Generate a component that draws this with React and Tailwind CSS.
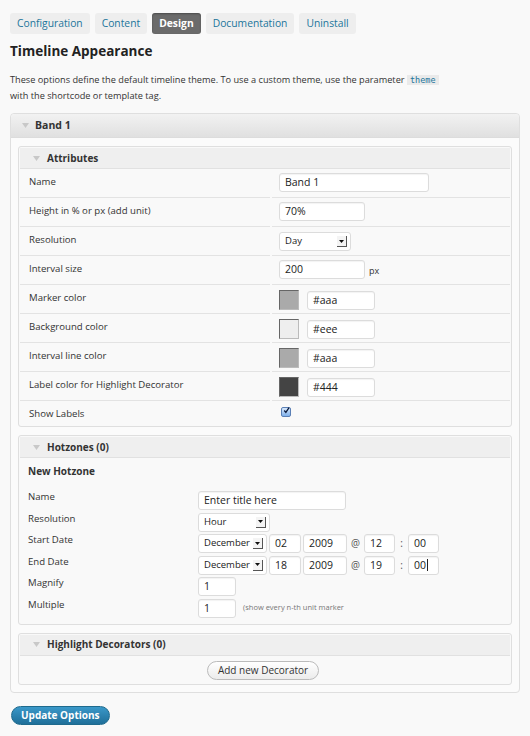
import React from 'react';

const Tri = () => (
  <svg width="7" height="5" viewBox="0 0 7 5" className="shrink-0">
    <path d="M0 0 L7 0 L3.5 5 Z" fill="#c8c8c8" />
  </svg>
);

const Input = ({ value, w, caret }) => (
  <div
    className={`${w} h-[19px] rounded-[3px] border border-[#dcdcdc] bg-white px-[5px] text-[10.5px] leading-[17px] text-[#222] shadow-[inset_0_1px_1px_rgba(0,0,0,0.05)] flex items-center`}
  >
    {value}
    {caret && <span className="ml-px h-[12px] w-px bg-[#222]" />}
  </div>
);

const Select = ({ value, w }) => (
  <div
    className={`${w} h-[19px] rounded-[3px] border border-[#dcdcdc] bg-white pl-[5px] pr-[3px] text-[9.5px] text-[#222] flex items-center justify-between`}
  >
    <span>{value}</span>
    <span className="flex h-[11px] w-[10px] shrink-0 items-center justify-center border-r border-b border-[#555] bg-[#f4f4f4]">
      <svg width="5" height="3" viewBox="0 0 5 3">
        <path d="M0 0 L5 0 L2.5 3 Z" fill="#111" />
      </svg>
    </span>
  </div>
);

const Swatch = ({ color }) => (
  <span className={`h-[20px] w-[20px] border border-[#666] border-r-[#bbb] border-b-[#bbb] ${color}`} />
);

const Row = ({ label, last, children }) => (
  <div className="grid grid-cols-[250px_1fr] gap-x-[2px]">
    <div className={last ? 'h-[24px] pl-[9px] pt-[6px] leading-[14px]' : 'h-[29px] border-b border-[#e3e3e3] pl-[9px] pt-[6px] leading-[14px]'}>{label}</div>
    <div className={last ? 'h-[24px] pl-[7px] pt-[4px] flex items-start gap-[4px]' : 'h-[29px] border-b border-[#e3e3e3] pl-[7px] pt-[4px] flex items-start gap-[4px]'}>{children}</div>
  </div>
);

const ColorRow = ({ label, color, value }) => (
  <Row label={label}>
    <div className="flex items-center gap-[8px] pt-px">
      <Swatch color={color} />
      <Input value={value} w="w-[68px]" />
    </div>
  </Row>
);

const SubHead = ({ title }) => (
  <div className="flex h-[21px] items-center gap-[7px] border-b border-[#e1e1e1] bg-[#efefef] pl-[13px] text-[10px] font-bold text-[#333]">
    <Tri />
    {title}
  </div>
);

const HzRow = ({ label, children }) => (
  <div className="flex items-start">
    <div className="w-[178px] shrink-0 pl-[8px] leading-[14px] -mt-px">{label}</div>
    <div className="flex items-center">{children}</div>
  </div>
);

export default function App() {
  const tabs = ['Configuration', 'Content', 'Design', 'Documentation', 'Uninstall'];
  return (
    <div className="min-h-screen bg-[#f9f9f9] px-[10px] pt-[13px] font-['Open_Sans',sans-serif] text-[9.6px] text-[#333]">
      <div className="flex gap-[5px]">
        {tabs.map((t) =>
          t === 'Design' ? (
            <div key={t} className="h-[21px] rounded-[3px] bg-[#6b6b6b] px-[7px] text-[10.3px] font-bold leading-[21px] text-white shadow-[inset_0_1px_2px_rgba(0,0,0,0.3)]">
              {t}
            </div>
          ) : (
            <div key={t} className="h-[21px] rounded-[3px] bg-[#eeeeee] px-[7px] text-[10.3px] leading-[21px] text-[#21759b]">
              {t}
            </div>
          )
        )}
      </div>

      <h2 className="mt-[7px] text-[13.5px] font-bold leading-[20px] text-[#222]">Timeline Appearance</h2>

      <p className="mt-[11px] text-[9.2px] leading-[16px] text-[#333]">
        These options define the default timeline theme. To use a custom theme, use the parameter{' '}
        <code className="bg-[#eaeaea] px-[3px] font-['DejaVu_Sans_Mono',monospace] text-[8.5px] leading-[12px] text-[#21759b]">theme</code>
        <br />
        with the shortcode or template tag.
      </p>

      <div className="mt-[9px] rounded-[4px] border border-[#dfdfdf] bg-[#fbfbfb]">
        <div className="flex h-[24px] items-center gap-[6px] rounded-t-[4px] border-b border-[#dcdcdc] bg-gradient-to-b from-[#f2f2f2] to-[#e0e0e0] pl-[11px] text-[10.5px] font-bold text-[#333]">
          <Tri />
          Band 1
        </div>

        <div className="flex flex-col gap-[8px] px-[7px] pt-[8px] pb-[7px]">
          {/* Attributes */}
          <div className="rounded-[3px] border border-[#dfdfdf] bg-[#f9f9f9] p-px">
            <SubHead title="Attributes" />
            <Row label="Name">
              <Input value="Band 1" w="w-[150px]" />
            </Row>
            <Row label="Height in % or px (add unit)">
              <Input value="70%" w="w-[86px]" />
            </Row>
            <Row label="Resolution">
              <div className="pt-px"><Select value="Day" w="w-[72px]" /></div>
            </Row>
            <Row label="Interval size">
              <Input value="200" w="w-[86px]" />
              <span className="pt-[4px] text-[9px]">px</span>
            </Row>
            <ColorRow label="Marker color" color="bg-[#aaaaaa]" value="#aaa" />
            <ColorRow label="Background color" color="bg-[#eeeeee]" value="#eee" />
            <ColorRow label="Interval line color" color="bg-[#aaaaaa]" value="#aaa" />
            <ColorRow label="Label color for Highlight Decorator" color="bg-[#444444]" value="#444" />
            <Row label="Show Labels" last>
              <span className="mt-[2px] ml-[2px] flex h-[10px] w-[10px] items-center justify-center rounded-[2px] border border-[#5a7fb5] bg-gradient-to-b from-[#d8e8fb] to-[#7fb0ea]">
                <svg width="11" height="11" viewBox="0 0 11 11" className="-mt-[3px] ml-[1px]">
                  <path d="M2 5.5 L4.5 8.5 L9.5 1" stroke="#0b1a3a" strokeWidth="2" fill="none" />
                </svg>
              </span>
            </Row>
          </div>

          {/* Hotzones */}
          <div className="rounded-[3px] border border-[#dfdfdf] bg-[#f9f9f9] p-px pb-[6px]">
            <SubHead title="Hotzones (0)" />
            <div className="pl-[8px] pt-[6px] text-[10px] font-bold leading-[14px]">New Hotzone</div>
            <div className="mt-[13px] flex flex-col gap-[2.5px]">
              <HzRow label="Name">
                <Input value="Enter title here" w="w-[148px]" />
              </HzRow>
              <HzRow label="Resolution">
                <Select value="Hour" w="w-[72px]" />
              </HzRow>
              <HzRow label="Start Date">
                <Select value="December" w="w-[69px]" />
                <span className="ml-[2px]"><Input value="02" w="w-[32px]" /></span>
                <span className="ml-[2px]"><Input value="2009" w="w-[44px]" /></span>
                <span className="w-[17px] text-center text-[10px] text-[#555]">@</span>
                <Input value="12" w="w-[31px]" />
                <span className="w-[13px] text-center text-[10px] text-[#555]">:</span>
                <Input value="00" w="w-[31px]" />
              </HzRow>
              <HzRow label="End Date">
                <Select value="December" w="w-[69px]" />
                <span className="ml-[2px]"><Input value="18" w="w-[32px]" /></span>
                <span className="ml-[2px]"><Input value="2009" w="w-[44px]" /></span>
                <span className="w-[17px] text-center text-[10px] text-[#555]">@</span>
                <Input value="19" w="w-[31px]" />
                <span className="w-[13px] text-center text-[10px] text-[#555]">:</span>
                <Input value="00" w="w-[31px]" caret />
              </HzRow>
              <HzRow label="Magnify">
                <Input value="1" w="w-[38px]" />
              </HzRow>
              <HzRow label="Multiple">
                <Input value="1" w="w-[38px]" />
                <span className="ml-[7px] text-[7.5px] text-[#777]">(show every n-th unit marker</span>
              </HzRow>
            </div>
          </div>

          {/* Highlight Decorators */}
          <div className="rounded-[3px] border border-[#dfdfdf] bg-[#f9f9f9] p-px pb-[4px]">
            <SubHead title="Highlight Decorators (0)" />
            <div className="flex justify-center pt-[5px] pr-[4px]">
              <button className="h-[19px] rounded-full border border-[#bbbbbb] bg-gradient-to-b from-white to-[#ececec] px-[10px] text-[10px] leading-[17px] text-[#333]">
                Add new Decorator
              </button>
            </div>
          </div>
        </div>
      </div>

      <button className="mt-[13px] ml-px h-[19px] rounded-full border border-[#1e6a8d] bg-gradient-to-b from-[#3a98c9] to-[#1f6f99] px-[9px] text-[10px] font-bold leading-[17px] text-white">
        Update Options
      </button>
    </div>
  );
}
